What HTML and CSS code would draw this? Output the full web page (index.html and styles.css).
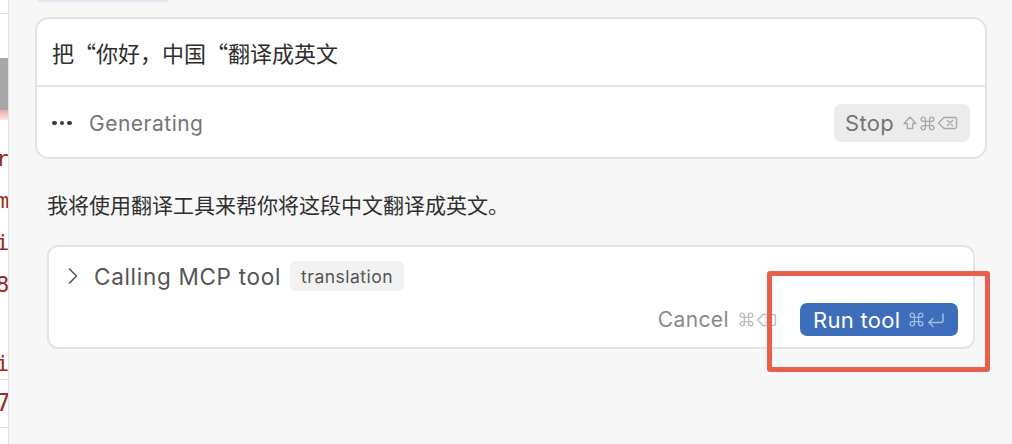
FILE: index.html
```html
<!DOCTYPE html>
<html lang="zh-CN">
<head>
<meta charset="utf-8">
<title>MCP tool</title>
<link rel="stylesheet" href="styles.css">
</head>
<body>
<div class="app">
  <aside class="editor-strip">
    <div class="strip-line strip-top"></div>
    <div class="strip-sel"></div>
    <div class="strip-err"></div>
    <div class="strip-gap"></div>
    <div class="code-line"><span>r</span></div>
    <div class="code-line"><span>m</span></div>
    <div class="code-line"><span>i</span></div>
    <div class="code-line"><span>8</span></div>
    <div class="code-line blank"></div>
    <div class="code-line short"><span>i</span></div>
    <div class="strip-line"></div>
    <div class="code-line seven"><span>7</span></div>
    <div class="strip-line"></div>
  </aside>
  <main class="panel">
    <div class="tab-indicator"></div>
    <section class="composer">
      <div class="composer-input">把“你好，中国“翻译成英文</div>
      <div class="composer-footer">
        <div class="status">
          <span class="dots"><i></i><i></i><i></i></span>
          <span class="status-text">Generating</span>
        </div>
        <button class="stop-btn">
          <span class="btn-label">Stop</span>
          <span class="keys">
            <svg class="key k-shift" viewBox="0 0 16 16"><path d="M8 2 L2 8.5 H5.3 V13.5 H10.7 V8.5 H14 Z" fill="none" stroke="currentColor" stroke-width="1.3" stroke-linejoin="round"/></svg>
            <svg class="key k-cmd" viewBox="0 0 24 24"><path d="M15 6v12a3 3 0 1 0 3-3H6a3 3 0 1 0 3 3V6a3 3 0 1 0-3 3h12a3 3 0 1 0-3-3" fill="none" stroke="currentColor" stroke-width="1.9" stroke-linejoin="round"/></svg>
            <svg class="key k-del" viewBox="0 0 21 16"><path d="M7 2.5 H18 a1.5 1.5 0 0 1 1.5 1.5 V12 a1.5 1.5 0 0 1 -1.5 1.5 H7 L1.5 8 Z" fill="none" stroke="currentColor" stroke-width="1.3" stroke-linejoin="round"/><path d="M10.5 5.5 L15.5 10.5 M15.5 5.5 L10.5 10.5" stroke="currentColor" stroke-width="1.3" stroke-linecap="round"/></svg>
          </span>
        </button>
      </div>
    </section>
    <p class="reply">我将使用翻译工具来帮你将这段中文翻译成英文。</p>
    <section class="tool-card">
      <div class="tool-head">
        <svg class="chevron" width="10" height="16" viewBox="0 0 10 16"><path d="M1.5 1 L8.5 8 L1.5 15" fill="none" stroke="#555" stroke-width="1.6" stroke-linecap="round" stroke-linejoin="round"/></svg>
        <span class="tool-title">Calling MCP tool</span>
        <span class="badge">translation</span>
      </div>
      <div class="tool-actions">
        <span class="cancel">
          <span class="btn-label">Cancel</span>
          <span class="keys">
            <svg class="key k-cmd" viewBox="0 0 24 24"><path d="M15 6v12a3 3 0 1 0 3-3H6a3 3 0 1 0 3 3V6a3 3 0 1 0-3 3h12a3 3 0 1 0-3-3" fill="none" stroke="currentColor" stroke-width="1.9" stroke-linejoin="round"/></svg>
            <svg class="key k-del" viewBox="0 0 21 16"><path d="M7 2.5 H18 a1.5 1.5 0 0 1 1.5 1.5 V12 a1.5 1.5 0 0 1 -1.5 1.5 H7 L1.5 8 Z" fill="none" stroke="currentColor" stroke-width="1.3" stroke-linejoin="round"/><path d="M10.5 5.5 L15.5 10.5 M15.5 5.5 L10.5 10.5" stroke="currentColor" stroke-width="1.3" stroke-linecap="round"/></svg>
          </span>
        </span>
        <button class="run-btn">
          <span class="btn-label">Run tool</span>
          <span class="keys">
            <svg class="key k-cmd" viewBox="0 0 24 24"><path d="M15 6v12a3 3 0 1 0 3-3H6a3 3 0 1 0 3 3V6a3 3 0 1 0-3 3h12a3 3 0 1 0-3-3" fill="none" stroke="currentColor" stroke-width="1.9" stroke-linejoin="round"/></svg>
            <svg class="key k-ret" viewBox="0 0 20 16"><path d="M17 2 V8.5 a2 2 0 0 1 -2 2 H3" fill="none" stroke="currentColor" stroke-width="1.5" stroke-linecap="round" stroke-linejoin="round"/><path d="M7 6.5 L3 10.5 L7 14.5" fill="none" stroke="currentColor" stroke-width="1.5" stroke-linecap="round" stroke-linejoin="round"/></svg>
          </span>
        </button>
      </div>
    </section>
  </main>
</div>
<div class="highlight"></div>
</body>
</html>
```

FILE: styles.css
```css
* { box-sizing: border-box; }
html, body { margin: 0; padding: 0; }
body {
  width: 1012px;
  height: 444px;
  overflow: hidden;
  font-family: "Inter", "Noto Sans CJK SC", sans-serif;
  background: #f7f7f7;
  position: relative;
}
.app {
  display: flex;
  height: 444px;
}
.editor-strip {
  width: 9px;
  flex: none;
  background: #ffffff;
  border-right: 1px solid #e2e2e2;
  overflow: hidden;
  display: flex;
  flex-direction: column;
}
.strip-line {
  height: 1px;
  background: #e0e0e0;
  flex: none;
}
.strip-top { margin-top: 13px; }
.strip-sel {
  margin-top: 44px;
  height: 52px;
  background: #a7a7a7;
  flex: none;
}
.strip-err {
  height: 10px;
  background: linear-gradient(#f0a8a0, #fbe7e4);
  flex: none;
}
.strip-gap { height: 18px; flex: none; }
.code-line {
  height: 42px;
  flex: none;
  font-family: "DejaVu Sans Mono", monospace;
  font-size: 22px;
  color: #9a2a22;
  line-height: 42px;
  white-space: nowrap;
}
.code-line span { margin-left: -4px; }
.code-line.short { height: 31px; line-height: 31px; }
.code-line.seven { height: 47px; line-height: 47px; font-size: 24px; }

.panel {
  flex: 1;
  display: flex;
  flex-direction: column;
  align-items: flex-start;
}
.tab-indicator {
  margin-left: 29px;
  width: 130px;
  height: 2px;
  background: #e6e6f4;
}
.composer {
  margin-top: 15px;
  margin-left: 26px;
  width: 952px;
  height: 142px;
  background: #ffffff;
  border: 2px solid #e4e4e4;
  border-radius: 14px;
  display: flex;
  flex-direction: column;
}
.composer-input {
  height: 68px;
  display: flex;
  align-items: center;
  padding-left: 15px;
  font-family: "Noto Sans CJK SC", sans-serif;
  font-size: 22px;
  color: #2e2e2e;
  border-bottom: 2px solid #e4e4e4;
}
.composer-footer {
  flex: 1;
  display: flex;
  align-items: center;
  justify-content: space-between;
  padding: 2px 15px 0 15px;
}
.status {
  display: flex;
  align-items: center;
}
.dots {
  display: flex;
  gap: 3px;
  width: 37px;
}
.dots i {
  width: 4.5px;
  height: 4.5px;
  border-radius: 50%;
  background: #3c3c3c;
}
.status-text {
  font-size: 21px;
  letter-spacing: 0.5px;
  color: #767676;
}
.keys {
  display: flex;
  align-items: center;
  gap: 1px;
}
.key { display: block; height: 17px; }
.k-shift { width: 16px; height: 16px; }
.k-cmd { width: 17px; height: 17px; }
.k-del { width: 21px; height: 16px; }
.k-ret { width: 20px; height: 16px; }
.stop-btn {
  border: none;
  background: #ececec;
  border-radius: 7px;
  height: 38px;
  width: 136px;
  padding: 0 12px 0 11px;
  font-family: "Inter", sans-serif;
  font-size: 22px;
  letter-spacing: 0.3px;
  color: #757575;
  display: flex;
  align-items: center;
  justify-content: space-between;
}
.stop-btn .keys { color: #a8a8a8; }
.reply {
  margin: 30px 0 0 38px;
  height: 30px;
  line-height: 30px;
  font-family: "Noto Sans CJK SC", sans-serif;
  font-size: 21px;
  color: #2f2f2f;
}
.tool-card {
  margin-top: 26px;
  margin-left: 38px;
  width: 928px;
  height: 104px;
  background: #ffffff;
  border: 2px solid #e4e4e4;
  border-radius: 11px;
  padding: 14px 15px 12px 19px;
  display: flex;
  flex-direction: column;
  gap: 12px;
}
.tool-head {
  height: 30px;
  display: flex;
  align-items: center;
}
.chevron { flex: none; }
.tool-title {
  margin-left: 16px;
  font-size: 22.5px;
  letter-spacing: 0.7px;
  color: #555555;
}
.badge {
  margin-left: 9px;
  height: 30px;
  padding: 0 11px;
  display: flex;
  align-items: center;
  background: #f2f2f2;
  border-radius: 5px;
  font-size: 17.5px;
  letter-spacing: 0.5px;
  color: #555555;
}
.tool-actions {
  height: 33px;
  display: flex;
  align-items: center;
  justify-content: flex-end;
  gap: 23px;
}
.cancel {
  font-size: 21px;
  letter-spacing: 0.4px;
  color: #8a8a8a;
  display: flex;
  align-items: center;
  gap: 9px;
}
.cancel .keys { color: #bdbdbd; }
.run-btn {
  border: none;
  background: #3d6ebb;
  border-radius: 7px;
  height: 33px;
  width: 158px;
  padding: 0 12px 0 13px;
  font-family: "Inter", sans-serif;
  font-size: 22px;
  letter-spacing: 0.3px;
  color: #ffffff;
  display: flex;
  align-items: center;
  justify-content: space-between;
}
.run-btn .keys { color: #a3bbe3; }
.highlight {
  position: absolute;
  left: 767px;
  top: 271px;
  width: 223px;
  height: 101px;
  border: 5px solid #e8604c;
  border-radius: 3px;
}
```
